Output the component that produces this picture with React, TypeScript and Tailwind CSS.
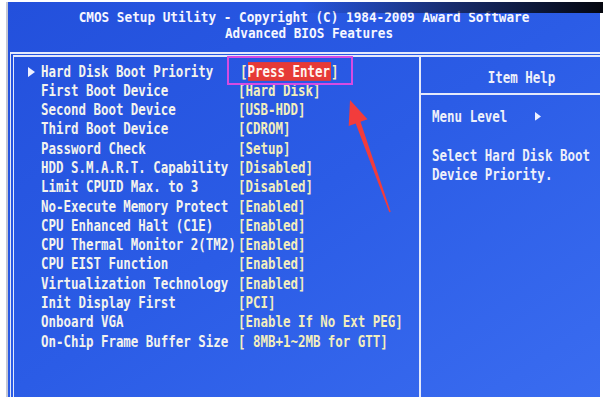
import React from 'react';

interface Row {
  label: string;
  value: string;
  selected?: boolean;
}

const rows: Row[] = [
  { label: 'Hard Disk Boot Priority', value: 'Press Enter', selected: true },
  { label: 'First Boot Device', value: '[Hard Disk]' },
  { label: 'Second Boot Device', value: '[USB-HDD]' },
  { label: 'Third Boot Device', value: '[CDROM]' },
  { label: 'Password Check', value: '[Setup]' },
  { label: 'HDD S.M.A.R.T. Capability', value: '[Disabled]' },
  { label: 'Limit CPUID Max. to 3', value: '[Disabled]' },
  { label: 'No-Execute Memory Protect', value: '[Enabled]' },
  { label: 'CPU Enhanced Halt (C1E)', value: '[Enabled]' },
  { label: 'CPU Thermal Monitor 2(TM2)', value: '[Enabled]' },
  { label: 'CPU EIST Function', value: '[Enabled]' },
  { label: 'Virtualization Technology', value: '[Enabled]' },
  { label: 'Init Display First', value: '[PCI]' },
  { label: 'Onboard VGA', value: '[Enable If No Ext PEG]' },
  { label: 'On-Chip Frame Buffer Size', value: '[ 8MB+1~2MB for GTT]' },
];

function Pointer() {
  return (
    <svg width="7" height="8" viewBox="0 0 7 8">
      <polygon points="0,0 7,4 0,8" fill="#eef0ff" />
    </svg>
  );
}

export default function App() {
  return (
    <div className="relative w-[603px] h-[397px] overflow-hidden bg-white pl-[6px] pt-[2px] pr-[3px] flex font-['DejaVu_Sans_Mono','Liberation_Mono',monospace] font-bold">
      <div className="flex-1 flex flex-col border-l-2 border-[#c5c8d4] bg-gradient-to-br from-[#2350dc] via-[#2b5ce6] to-[#3a6cf0]">
        {/* title */}
        <div className="pt-[8px] flex flex-col items-center text-[12.7px] leading-[16px] text-[#f6f6ff]">
          <div className="scale-y-[1.1]">CMOS Setup Utility - Copyright (C) 1984-2009 Award Software</div>
          <div className="scale-y-[1.1] pl-[10px]">Advanced BIOS Features</div>
        </div>

        {/* frame */}
        <div className="mt-[10px] ml-[2px] flex-1 flex border-t-[5px] border-l-[4px] border-double border-[#e4e9fb]">
          <div className="w-[407px] border-r-2 border-[#e4e9fb] pt-[4.5px]">
            {rows.map((row) => (
              <div
                key={row.label}
                className="h-[19.3px] flex items-center pl-[14px] text-[12.45px] leading-[14px] scale-y-[1.25] whitespace-pre"
              >
                <span className="w-[13px] flex items-center">{row.selected && <Pointer />}</span>
                <span className="w-[197px] text-[#f3f3ee]">{row.label}</span>
                {row.selected ? (
                  <span className="text-[#f3efc0] pl-[2px]">
                    [<span className="bg-[#e63a36] text-[#fff4f0] pr-[1px]">Press Enter</span>]
                  </span>
                ) : (
                  <span className="text-[#f2eebd]">{row.value}</span>
                )}
              </div>
            ))}
          </div>

          <div className="flex-1 flex flex-col text-[12.5px] text-[#eef0fa]">
            <div className="h-[38px] pt-[6px] pl-[22px] flex items-center justify-center border-b-2 border-[#e4e9fb]">
              <span className="scale-y-[1.25]">Item Help</span>
            </div>
            <div className="pt-[11.5px] pl-[11px] leading-[19.5px]">
              <div className="flex items-center scale-y-[1.25]">
                <span className="w-[103px]">Menu Level</span>
                <svg width="6" height="7" viewBox="0 0 6 7">
                  <polygon points="0,0 6,3.5 0,7" fill="#eef0ff" />
                </svg>
              </div>
              <div className="h-[19.5px]" />
              <div className="scale-y-[1.25] origin-left">Select Hard Disk Boot</div>
              <div className="scale-y-[1.25] origin-left">Device Priority.</div>
            </div>
          </div>
        </div>
      </div>

      {/* dark bezel shadow at top right */}
      <div className="absolute left-[300px] right-0 top-[2px] h-[11px] bg-gradient-to-r from-transparent via-[#10183a]/70 to-[#05070f]" />

      {/* annotation: magenta box */}
      <div className="absolute left-[227px] top-[56px] w-[126px] h-[29px] border-[2.5px] border-[#d64be2]" />

      {/* annotation: red arrow */}
      <svg className="absolute left-0 top-0" width="603" height="397" viewBox="0 0 603 397">
        <polygon
          points="350,100 367.5,119.2 360.5,121.8 390.7,211.8 389.3,212.2 355.7,123.4 348.7,126"
          fill="#f23c3c"
        />
      </svg>
    </div>
  );
}
